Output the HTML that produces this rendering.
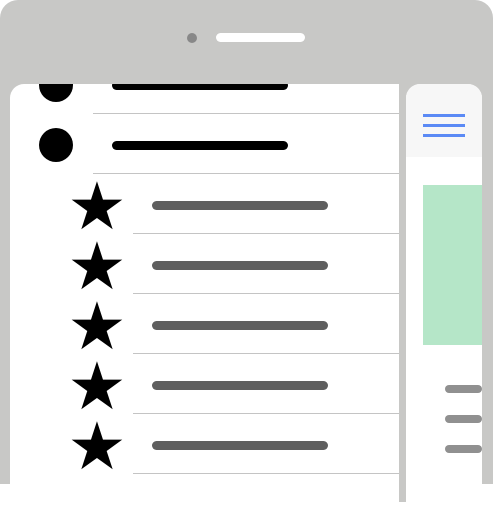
<!DOCTYPE html>
<html><head><style>
body{margin:0;width:493px;height:514px;background:#fff;position:relative;overflow:hidden;font-family:"Liberation Sans","DejaVu Sans",sans-serif}
div{position:absolute;box-sizing:border-box}
.sep{height:1px;background:#c4c4c4}
.bb{height:9px;border-radius:5px;background:#000;left:112px;width:176px}
.gb{height:9px;border-radius:5px;background:#5f5f5f;left:152px;width:176px}
.st{left:67px;width:60px;height:52px;font-size:66px;line-height:52px;text-align:center;color:#000}
.g{height:8px;border-radius:4px;background:#909090;left:445px;width:40px}
</style></head><body>
<div style="left:0;top:0;width:493px;height:484px;background:#c8c8c6;border-radius:18px 18px 0 0"></div>
<div style="left:187px;top:33px;width:10px;height:10px;border-radius:50%;background:#888"></div>
<div style="left:216px;top:33px;width:89px;height:9px;border-radius:5px;background:#fff"></div>
<div style="left:10px;top:84px;width:392px;height:430px;background:#fff;border-radius:14px 0 0 0;overflow:hidden">
</div>
<div style="left:0;top:484px;width:493px;height:30px;background:#fff"></div>
<div style="left:399px;top:84px;width:7px;height:418px;background:#c8c8c6"></div>
<div style="left:406px;top:84px;width:76px;height:420px;background:#fff;border-radius:14px 14px 0 0;overflow:hidden">
 <div style="left:0;top:0;width:76px;height:73px;background:#f7f7f7"></div>
</div>
<div style="left:423px;top:114px;width:42px;height:3px;background:#5b8af5"></div>
<div style="left:423px;top:124px;width:42px;height:3px;background:#5b8af5"></div>
<div style="left:423px;top:134px;width:42px;height:3px;background:#5b8af5"></div>
<div style="left:423px;top:185px;width:59px;height:160px;background:#b5e6c8"></div>
<div class="g" style="top:385px;width:37px"></div>
<div class="g" style="top:415px;width:37px"></div>
<div class="g" style="top:445px;width:37px"></div>
<div style="left:10px;top:84px;width:389px;height:60px;overflow:hidden">
 <div style="left:29px;top:-16px;width:34px;height:34px;border-radius:50%;background:#000"></div>
 <div class="bb" style="left:102px;top:-3px"></div>
</div>
<div class="sep" style="left:93px;top:113px;width:306px"></div>
<div style="left:39px;top:128px;width:34px;height:34px;border-radius:50%;background:#000"></div>
<div class="bb" style="top:141px"></div>
<div class="sep" style="left:93px;top:173px;width:306px"></div>
<div class="st" style="top:180px">★</div><div class="gb" style="top:201px"></div>
<div class="sep" style="left:133px;top:233px;width:266px"></div>
<div class="st" style="top:240px">★</div><div class="gb" style="top:261px"></div>
<div class="sep" style="left:133px;top:293px;width:266px"></div>
<div class="st" style="top:300px">★</div><div class="gb" style="top:321px"></div>
<div class="sep" style="left:133px;top:353px;width:266px"></div>
<div class="st" style="top:360px">★</div><div class="gb" style="top:381px"></div>
<div class="sep" style="left:133px;top:413px;width:266px"></div>
<div class="st" style="top:420px">★</div><div class="gb" style="top:441px"></div>
<div class="sep" style="left:133px;top:473px;width:266px"></div>
</body></html>
